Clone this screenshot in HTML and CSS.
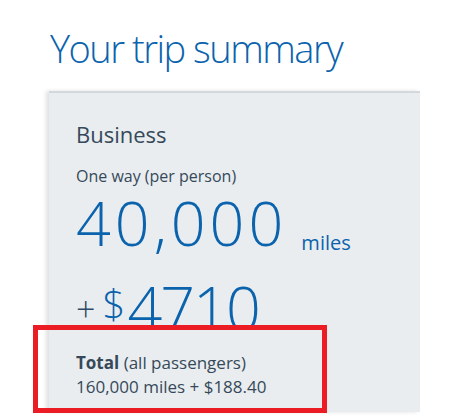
FILE: index.html
```html
<!DOCTYPE html>
<html lang="en">
<head>
  <meta charset="UTF-8" />
  <title>Your trip summary</title>
  <link rel="stylesheet" href="styles.css">
</head>
<body>
  <h1 class="title">Your trip summary</h1>

  <div class="card">
    <h3 class="cabin">Business</h3>
    <div class="per">One way (per person)</div>

    <div class="miles">
      <span class="big wide">40,000</span>
      <span class="unit">miles</span>
    </div>

    <div class="cash">
      <span class="plus">+</span>
      <span class="dollar">$</span><span class="big tight">4710</span>
    </div>

    <div class="total">
      <div><b>Total</b> (all passengers)</div>
      <div>160,000 miles + $188.40</div>
    </div>
  </div>

  <div class="highlight"></div>
</body>
</html>
```

FILE: styles.css
```css
:root {
  --blue: #0b63ad;
  --text: #36495a;
  --card: #e9edef;
}

body {
  margin: 0;
  font-family: 'Open Sans', sans-serif;
  color: var(--text);
  background: #fff;
  overflow: hidden;
  height: 416px;
}

.title {
  margin: 0;
  padding: 22px 0 0 50px;
  font-size: 38px;
  font-weight: 300;
  letter-spacing: -1.5px;
  line-height: 52px;
  color: var(--blue);
}

.card {
  margin: 17px 0 0 49px;
  width: 371px;
  height: 321px;
  background: var(--card);
  border-top: 2px solid #d3d8dd;
  box-shadow: -3px 0 4px rgba(0, 0, 0, 0.12);
  padding: 26px 0 0 27px;
  box-sizing: border-box;
  overflow: hidden;
}

.cabin {
  margin: 0;
  font-size: 22px;
  font-weight: 400;
  line-height: 30px;
}

.per {
  margin-top: 16px;
  font-size: 16px;
  line-height: 22px;
}

.big {
  font-size: 61px;
  font-weight: 300;
  color: var(--blue);
}

.wide {
  letter-spacing: 4px;
}

.tight {
  letter-spacing: -2px;
}

.miles {
  line-height: 70px;
  margin-top: 1px;
}

.unit {
  font-size: 20px;
  color: var(--blue);
  margin-left: 10px;
  vertical-align: -4px;
}

.cash {
  line-height: 70px;
  margin-top: -9px;
  height: 60px;
}

.plus {
  font-size: 34px;
  font-weight: 300;
  color: #2f4a68;
  vertical-align: 9px;
  margin-right: 3px;
}

.dollar {
  font-size: 40px;
  font-weight: 300;
  color: var(--blue);
  vertical-align: 12px;
  margin-right: 2px;
}

.total {
  position: relative;
  background: var(--card);
  padding-top: 22px;
  font-size: 17px;
  line-height: 24px;
}

.total b {
  font-weight: 700;
}

.highlight {
  position: absolute;
  left: 33px;
  top: 325px;
  width: 294px;
  height: 88px;
  border: 5px solid #ec1c24;
  box-sizing: border-box;
}
```
